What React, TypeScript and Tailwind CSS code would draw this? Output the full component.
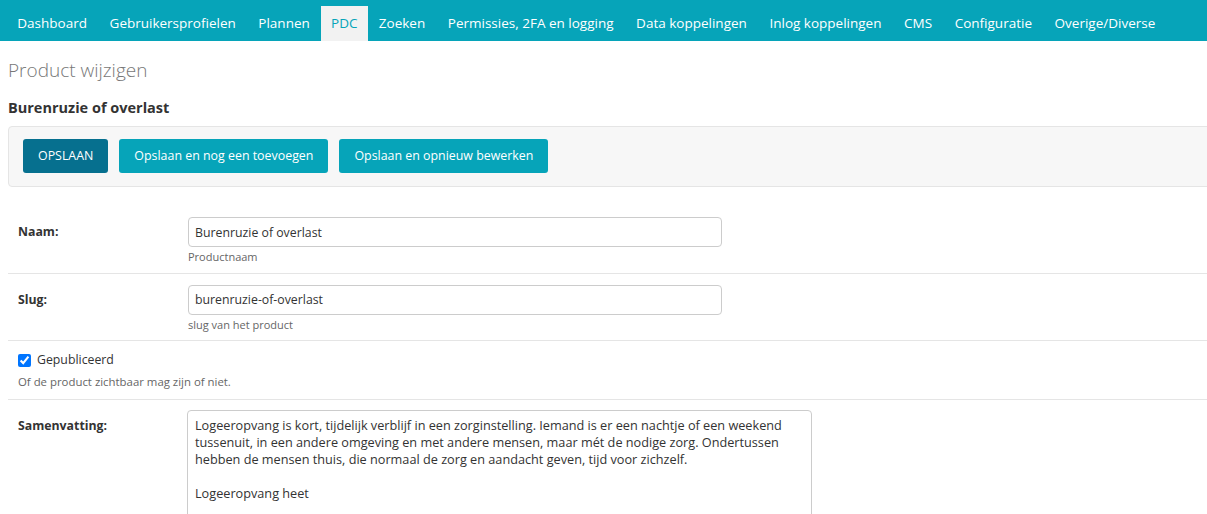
import React from 'react';

const navItems = [
  'Dashboard',
  'Gebruikersprofielen',
  'Plannen',
  'PDC',
  'Zoeken',
  'Permissies, 2FA en logging',
  'Data koppelingen',
  'Inlog koppelingen',
  'CMS',
  'Configuratie',
  'Overige/Diverse',
];

const summary =
  'Logeeropvang is kort, tijdelijk verblijf in een zorginstelling. Iemand is er een nachtje of een weekend tussenuit, in een andere omgeving en met andere mensen, maar mét de nodige zorg. Ondertussen hebben de mensen thuis, die normaal de zorg en aandacht geven, tijd voor zichzelf.\n\nLogeeropvang heet';

function TextRow({ label, value, help }: { label: string; value: string; help: string }) {
  return (
    <div className="flex border-b border-[#e5e5e5] pt-[11px] pb-[8.5px]">
      <label className="w-[180px] pl-[10px] pt-[6px] text-[12.3px] font-bold text-[#333]">{label}</label>
      <div>
        <input
          readOnly
          value={value}
          className="h-[30px] w-[534px] rounded-[4px] border border-[#ccc] px-[6px] text-[12.3px] text-[#333] outline-none"
        />
        <p className="mt-[2px] text-[11px] leading-[15px] text-[#666]">{help}</p>
      </div>
    </div>
  );
}

export default function App() {
  return (
    <div className="min-h-screen overflow-hidden bg-white font-['Open_Sans',sans-serif] text-[#333]">
      {/* Navigatie */}
      <nav className="flex h-[41px] items-end bg-[#06a4b9] pl-[6px]">
        {navItems.map((item) => (
          <a
            key={item}
            className={
              item === 'PDC'
                ? 'flex h-[35px] items-center bg-[#f2f2f2] px-[10px] pb-[1px] text-[13.5px] text-[#06a4b9]'
                : 'flex h-[35px] items-center px-[11.3px] pb-[1px] text-[13.5px] text-white'
            }
          >
            {item}
          </a>
        ))}
      </nav>

      <div className="px-[8px]">
        <h1 className="mt-[16px] text-[19px] font-light leading-[26px] text-[#777]">Product wijzigen</h1>
        <h2 className="mt-[15px] text-[14.5px] font-bold leading-[20px] text-[#333]">Burenruzie of overlast</h2>

        {/* Knoppen */}
        <div className="mt-[8px] mr-[-20px] flex gap-[11px] rounded-[4px] border border-[#e5e5e5] bg-[#f7f7f7] px-[14px] pt-[12px] pb-[13px]">
          <button className="h-[34px] rounded-[3px] bg-[#06708f] px-[15px] text-[12.4px] text-white">OPSLAAN</button>
          <button className="h-[34px] rounded-[3px] bg-[#06a4b9] px-[15px] text-[12.4px] text-white">
            Opslaan en nog een toevoegen
          </button>
          <button className="h-[34px] rounded-[3px] bg-[#06a4b9] px-[15px] text-[12.4px] text-white">
            Opslaan en opnieuw bewerken
          </button>
        </div>

        <div className="mt-[19px] mr-[-8px]">
          <TextRow label="Naam:" value="Burenruzie of overlast" help="Productnaam" />
          <TextRow label="Slug:" value="burenruzie-of-overlast" help="slug van het product" />

          <div className="border-b border-[#e5e5e5] px-[10px] pt-[10px] pb-[10px]">
            <label className="flex h-[18px] items-center gap-[6px] text-[12.3px] text-[#333]">
              <input type="checkbox" defaultChecked className="h-[13px] w-[13px] accent-[#0075ff]" />
              Gepubliceerd
            </label>
            <p className="mt-[5px] text-[11.4px] leading-[15px] text-[#666]">Of de product zichtbaar mag zijn of niet.</p>
          </div>

          <div className="flex pt-[10px]">
            <label className="w-[179px] pl-[10px] pt-[7px] text-[12.3px] font-bold text-[#333]">Samenvatting:</label>
            <textarea
              readOnly
              value={summary}
              className="h-[160px] w-[625px] resize-none rounded-[4px] border border-[#ccc] px-[7px] py-[6px] text-[12.7px] leading-[17px] text-[#333] outline-none"
            />
          </div>
        </div>
      </div>
    </div>
  );
}
